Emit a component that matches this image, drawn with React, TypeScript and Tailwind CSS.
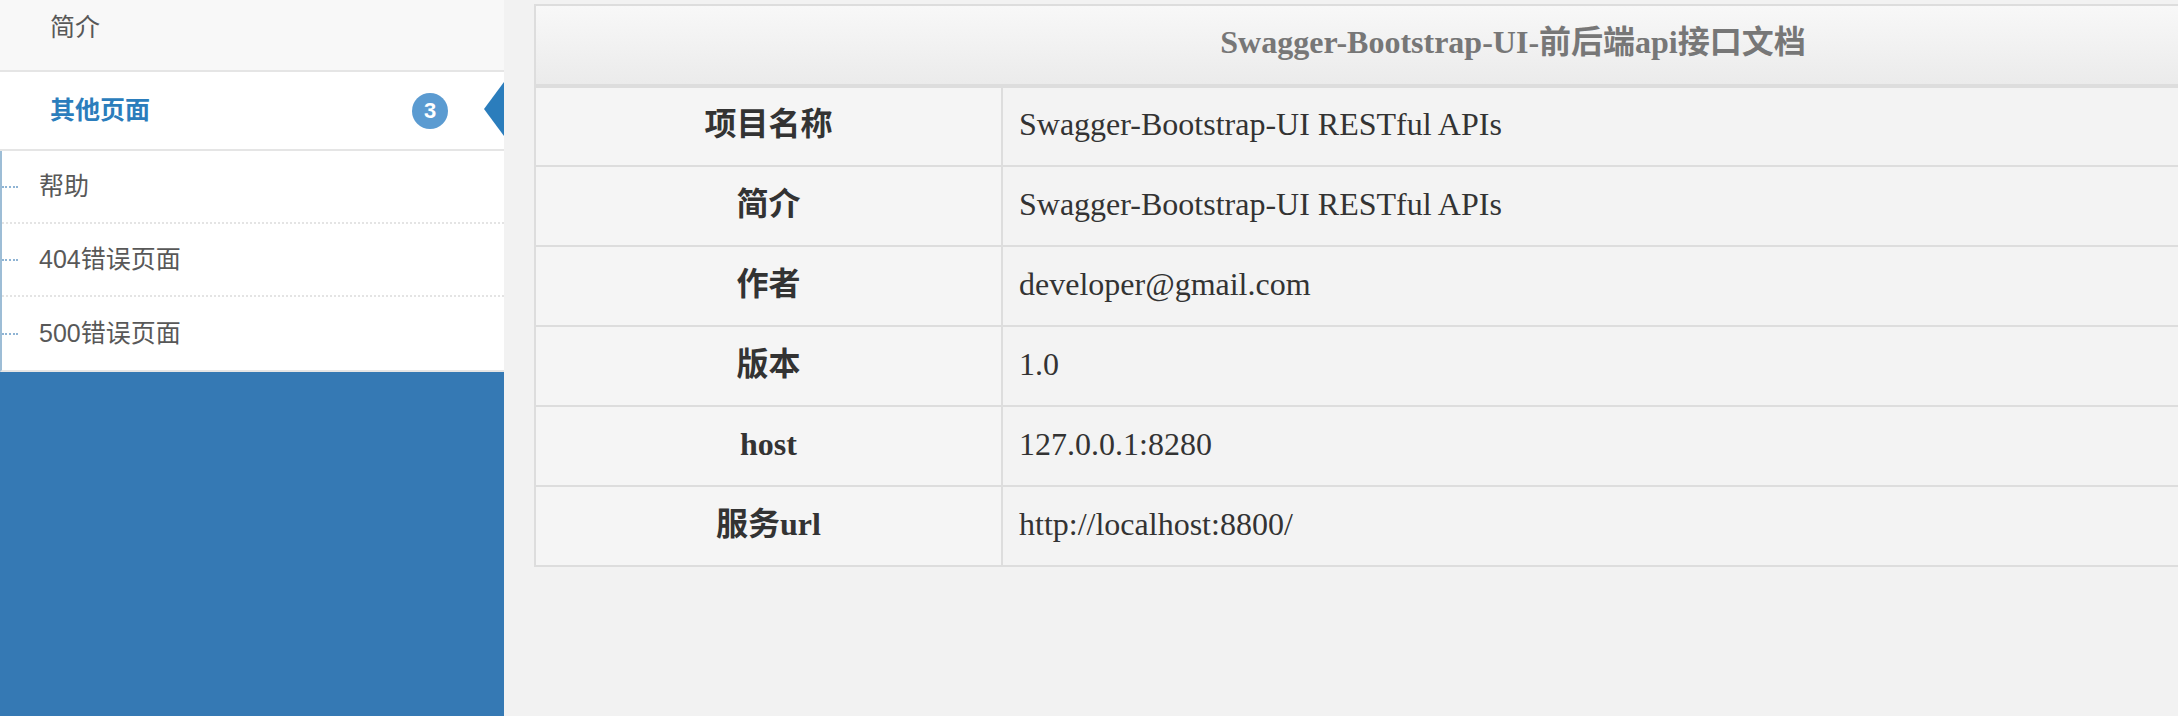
const SANS = "font-['Liberation_Sans','Noto_Sans_CJK_SC',sans-serif]";
const SERIF = "font-['Liberation_Serif','Noto_Sans_CJK_SC',serif]";

const subPages = ["帮助", "404错误页面", "500错误页面"];

const infoRows: [string, string][] = [
  ["项目名称", "Swagger-Bootstrap-UI RESTful APIs"],
  ["简介", "Swagger-Bootstrap-UI RESTful APIs"],
  ["作者", "developer@gmail.com"],
  ["版本", "1.0"],
  ["host", "127.0.0.1:8280"],
  ["服务url", "http://localhost:8800/"],
];

function Sidebar() {
  return (
    <aside className={`flex w-[504px] shrink-0 flex-col ${SANS}`}>
      <div className="h-[72px] border-b-2 border-[#e5e5e5] bg-[#f8f8f8] pl-[50px] pt-[9px] text-[25px] leading-[36px] text-[#585858]">
        简介
      </div>

      <div className="relative flex h-[79px] items-center justify-between border-b-2 border-[#e5e5e5] bg-white pl-[50px] pr-[56px]">
        <span className="text-[25px] font-bold text-[#2b7dbc]">其他页面</span>
        <span className="flex size-[36px] items-center justify-center rounded-full bg-[#5b9bd1] text-[22px] font-semibold leading-none text-white">
          3
        </span>
        <span className="absolute right-0 top-[10px] h-0 w-0 border-y-[27px] border-r-[20px] border-y-transparent border-r-[#2b7dbc]" />
      </div>

      <ul className="border-b-2 border-l-2 border-[#e5e5e5] border-l-[#9dbdd6] border-l-dotted bg-white">
        {subPages.map((name, i) => (
          <li
            key={name}
            className={`flex h-[73px] items-center text-[25px] text-[#585858] ${
              i < subPages.length - 1 ? "border-b-2 border-dotted border-[#e4e4e4]" : ""
            }`}
          >
            <span className="mr-[21px] w-[16px] border-t-2 border-dotted border-[#8fb4d4]" />
            {name}
          </li>
        ))}
      </ul>

      <div className="flex-1 bg-[#3579b4]" />
    </aside>
  );
}

export default function App() {
  return (
    <div className="flex h-[716px] w-[2178px] overflow-hidden bg-[#f2f2f2]">
      <Sidebar />
      <main className="min-w-0 flex-1 overflow-hidden pl-[30px] pt-[4px]">
        <table className={`w-[1958px] table-fixed border-collapse ${SERIF} text-[32px] text-[#333]`}>
          <colgroup>
            <col className="w-[467px]" />
            <col />
          </colgroup>
          <thead>
            <tr>
              <th
                colSpan={2}
                className="h-[81px] border-2 border-b-4 border-[#dddddd] bg-gradient-to-b from-[#f8f8f8] to-[#ebebeb] pb-[6px] text-center font-bold text-[#777]"
              >
                Swagger-Bootstrap-UI-前后端api接口文档
              </th>
            </tr>
          </thead>
          <tbody>
            {infoRows.map(([label, value]) => (
              <tr key={label} className="h-[80px]">
                <th className="border-2 border-[#dddddd] bg-[#f5f5f5] pb-[5px] text-center font-bold">
                  {label}
                </th>
                <td className="border-2 border-[#dddddd] bg-[#f3f3f3] pb-[5px] pl-[16px] text-left">
                  {value}
                </td>
              </tr>
            ))}
          </tbody>
        </table>
      </main>
    </div>
  );
}
